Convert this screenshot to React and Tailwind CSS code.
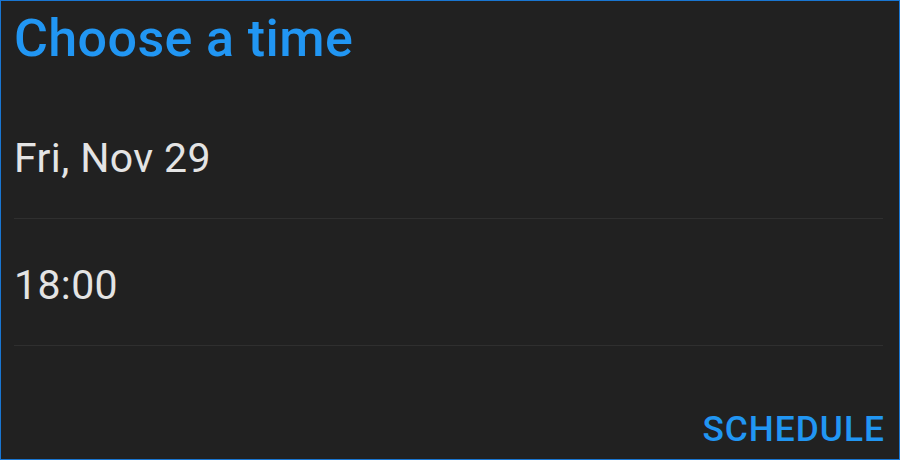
export default function App() {
  return (
    <div className="w-[900px] h-[460px] bg-[#212121] border border-[#1976d2] flex flex-col pl-[13px] pr-[16px] pt-[12px]" style={{ fontFamily: "Roboto, 'Liberation Sans', sans-serif" }}>
      <div className="text-[52px] leading-[52px] font-medium text-[#2196f3] tracking-[0.0075em]">Choose a time</div>
      <div className="mt-[27px] flex flex-col">
        <div className="h-[127px] border-b border-[#2f2f2f] pt-[46px] text-[41px] leading-[41px] text-[#e4e4e4] tracking-[0.00938em]">Fri, Nov 29</div>
        <div className="h-[127px] border-b border-[#2f2f2f] pt-[46px] text-[41px] leading-[41px] text-[#e4e4e4] tracking-[0.00938em]">18:00</div>
      </div>
      <div className="flex justify-end mt-[66px] -mr-[2px]">
        <span className="text-[35.3px] leading-[35.5px] font-medium text-[#2196f3] uppercase tracking-[0.02857em]">Schedule</span>
      </div>
    </div>
  );
}
